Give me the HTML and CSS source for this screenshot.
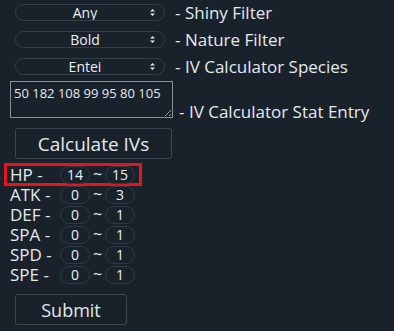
FILE: index.html
```html
<!DOCTYPE html>
<html lang="en">
<head>
  <meta charset="UTF-8" />
  <title>IV Calculator</title>
  <link rel="stylesheet" href="styles.css">
</head>
<body>
  <main class="panel">
    <div class="row">
      <div class="select-wrap">
        <select class="pill">
          <option>Any</option>
          <option>Yes</option>
          <option>No</option>
        </select>
        <svg class="arrow" width="5" height="7" viewBox="0 0 5 7"><path d="M2.5 0 L5 2.6 H0 Z M2.5 7 L5 4.4 H0 Z" fill="#dfe6ea"/></svg>
      </div>
      <span class="label">- Shiny Filter</span>
    </div>

    <div class="row">
      <div class="select-wrap">
        <select class="pill">
          <option>Bold</option>
          <option>Adamant</option>
        </select>
        <svg class="arrow" width="5" height="7" viewBox="0 0 5 7"><path d="M2.5 0 L5 2.6 H0 Z M2.5 7 L5 4.4 H0 Z" fill="#dfe6ea"/></svg>
      </div>
      <span class="label">- Nature Filter</span>
    </div>

    <div class="row">
      <div class="select-wrap">
        <select class="pill">
          <option>Entei</option>
          <option>Raikou</option>
          <option>Suicune</option>
        </select>
        <svg class="arrow" width="5" height="7" viewBox="0 0 5 7"><path d="M2.5 0 L5 2.6 H0 Z M2.5 7 L5 4.4 H0 Z" fill="#dfe6ea"/></svg>
      </div>
      <span class="label">- IV Calculator Species</span>
    </div>

    <div class="row entry">
      <textarea class="stats">50 182 108 99 95 80 105</textarea>
      <span class="label">- IV Calculator Stat Entry</span>
    </div>

    <button class="btn calc">Calculate IVs</button>

    <div class="ivs">
      <div class="iv highlight">
        <span class="stat">HP -</span>
        <input class="num" value="14"><span class="tilde">~</span><input class="num" value="15">
      </div>
      <div class="iv">
        <span class="stat">ATK -</span>
        <input class="num" value="0"><span class="tilde">~</span><input class="num" value="3">
      </div>
      <div class="iv">
        <span class="stat">DEF -</span>
        <input class="num" value="0"><span class="tilde">~</span><input class="num" value="1">
      </div>
      <div class="iv">
        <span class="stat">SPA -</span>
        <input class="num" value="0"><span class="tilde">~</span><input class="num" value="1">
      </div>
      <div class="iv">
        <span class="stat">SPD -</span>
        <input class="num" value="0"><span class="tilde">~</span><input class="num" value="1">
      </div>
      <div class="iv">
        <span class="stat">SPE -</span>
        <input class="num" value="0"><span class="tilde">~</span><input class="num" value="1">
      </div>
    </div>

    <button class="btn submit">Submit</button>
  </main>
</body>
</html>
```

FILE: styles.css
```css
html, body {
  margin: 0;
  padding: 0;
  background: #19222b;
}

body {
  font-family: 'Open Sans', 'DejaVu Sans', sans-serif;
  color: #e3e9ed;
  width: 394px;
  height: 331px;
  overflow: hidden;
}

.panel {
  padding: 0 0 0 10px;
  margin-top: -1px;
}

.row {
  display: flex;
  align-items: center;
  height: 27px;
}

.select-wrap {
  position: relative;
  margin-left: 5px;
}

.pill {
  appearance: none;
  -webkit-appearance: none;
  display: block;
  width: 150px;
  height: 17px;
  background: #19222b;
  border: 1px solid #323e48;
  border-radius: 9px;
  color: #e8eef2;
  font-family: inherit;
  font-size: 14px;
  text-align: center;
  text-align-last: center;
  padding: 0 10px 0 0;
  line-height: 15px;
}

.arrow {
  position: absolute;
  right: 10px;
  top: 5px;
  pointer-events: none;
}

.label {
  font-size: 17px;
  line-height: 20px;
  margin-left: 10px;
  white-space: nowrap;
}

.row.entry {
  height: auto;
  align-items: flex-end;
  margin-top: 1px;
}

.stats {
  display: block;
  width: 163px;
  height: 37px;
  box-sizing: border-box;
  background: #19222b;
  border: 1px solid #8a9096;
  color: #e3e9ed;
  font-family: inherit;
  font-size: 13px;
  padding: 2px 3px;
  margin: 0;
  resize: vertical;
}

.row.entry .label {
  margin-left: 6px;
  margin-bottom: -4px;
}

.btn {
  display: block;
  background: #19222b;
  color: #e3e9ed;
  border: 1px solid #3a4650;
  border-radius: 3px;
  font-family: inherit;
  cursor: pointer;
}

.calc {
  width: 157px;
  height: 31px;
  margin: 10px 0 0 5px;
  font-size: 19px;
}

.ivs {
  margin-top: 4px;
  margin-left: -6px;
}

.iv {
  display: flex;
  align-items: center;
  width: 129px;
  height: 17px;
  padding-left: 3px;
  border: 3px solid transparent;
  margin-top: -3px;
  font-size: 17px;
  line-height: 17px;
}

.iv:first-child {
  margin-top: 0;
}

.iv.highlight {
  border-color: #e8141c;
}

.stat {
  width: 50px;
  flex: none;
}

.num {
  width: 30px;
  height: 18px;
  flex: none;
  box-sizing: border-box;
  background: #19222b;
  border: 1px solid #2e3a44;
  border-radius: 9px;
  color: #e8eef2;
  font-family: inherit;
  font-size: 14px;
  text-align: center;
  padding: 0;
}

.tilde {
  width: 15px;
  text-align: center;
  font-size: 16px;
}

.submit {
  width: 112px;
  height: 31px;
  margin: 8px 0 0 5px;
  font-size: 18px;
}
```
